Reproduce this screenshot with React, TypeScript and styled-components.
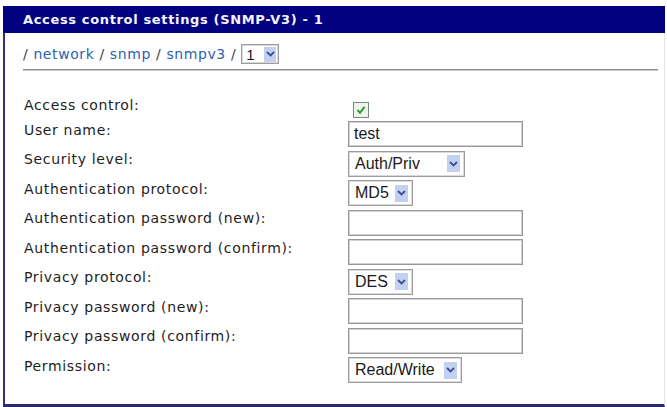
import React from "react";
import styled, { createGlobalStyle } from "styled-components";

const Global = createGlobalStyle`
  html, body { margin: 0; padding: 0; background: #ffffff; }
  body { font-family: "DejaVu Sans", Verdana, sans-serif; }
`;

const Frame = styled.section`
  margin: 6px 2px 0 3px;
  display: flex;
  flex-direction: column;
`;

const TitleBar = styled.div`
  height: 27px;
  background: #01017f;
  color: #f4f4ff;
  font-family: "DejaVu Sans", Verdana, sans-serif;
  font-weight: bold;
  font-size: 13px;
  letter-spacing: 0.65px;
  display: flex;
  align-items: center;
  padding-left: 20px;
`;

const Body = styled.div`
  border-left: 2px solid #30307a;
  border-right: 1px solid #e4e4ec;
  border-bottom: 3px solid #2c2a68;
  padding: 11px 6px 19px 18px;
  display: flex;
  flex-direction: column;
`;

const Crumbs = styled.nav`
  display: flex;
  align-items: center;
  height: 20px;
  font-family: "DejaVu Sans", Verdana, sans-serif;
  font-size: 14px;
  letter-spacing: 0.6px;
  color: #3a3a3a;
  white-space: pre;
`;

const Crumb = styled.a`
  color: #2f5fae;
  text-decoration: none;
`;

const Rule = styled.hr`
  margin: 5px 0 0 0;
  border: none;
  border-top: 1px solid #8c8c8c;
  border-bottom: 1px solid #c8c8c8;
  height: 0;
`;

const Form = styled.div`
  margin-top: 26px;
  display: flex;
  flex-direction: column;
`;

const Row = styled.div<{ $h: number }>`
  display: grid;
  grid-template-columns: 325px auto;
  align-items: center;
  height: ${(p) => p.$h}px;
`;

const Label = styled.span`
  padding: 0 0 9px 1px;
  font-family: "DejaVu Sans", Verdana, sans-serif;
  font-size: 14px;
  letter-spacing: 0.65px;
  color: #1e1e1e;
  white-space: nowrap;
`;

const Control = styled.div`
  display: flex;
  align-items: center;
`;

const TextInput = styled.div`
  box-sizing: border-box;
  width: 175px;
  height: 26px;
  border: 1px solid #989898;
  box-shadow: inset 0 0 0 1px #d2d2d2;
  background: #fff;
  padding-left: 5px;
  display: flex;
  align-items: center;
  font-family: "Liberation Sans", Arial, sans-serif;
  font-size: 16px;
  color: #1a1a1a;
`;

const SelectBox = styled.div<{ $w: number; $small?: boolean }>`
  box-sizing: border-box;
  width: ${(p) => p.$w}px;
  height: ${(p) => (p.$small ? 20 : 26)}px;
  border: 1px solid #9c9c9c;
  box-shadow: inset 0 0 0 1px #dadada;
  background: #fff;
  display: flex;
  align-items: center;
  padding-left: ${(p) => (p.$small ? 4 : 6)}px;
  font-family: "Liberation Sans", Arial, sans-serif;
  font-size: ${(p) => (p.$small ? 15 : 16)}px;
  color: #1a1a1a;
`;

const SelectText = styled.span`
  flex: 1;
  white-space: nowrap;
`;

const ArrowBox = styled.span<{ $small?: boolean }>`
  width: ${(p) => (p.$small ? 12 : 13)}px;
  height: ${(p) => (p.$small ? 15 : 17)}px;
  margin-right: ${(p) => (p.$small ? 2 : 4)}px;
  background: #c3d1f1;
  display: flex;
  align-items: center;
  justify-content: center;
`;

const CheckBox = styled.span`
  box-sizing: border-box;
  margin-left: 5px;
  width: 16px;
  height: 16px;
  border: 1px solid #7a8a7a;
  background: #eef4ec;
  display: flex;
  align-items: center;
  justify-content: center;
`;

const Chevron = () => (
  <svg width="9" height="6" viewBox="0 0 9 6">
    <polyline points="1,1 4.5,4.5 8,1" fill="none" stroke="#3c4f99" strokeWidth="1.8" />
  </svg>
);

const Select = ({ value, w, small }: { value: string; w: number; small?: boolean }) => (
  <SelectBox $w={w} $small={small}>
    <SelectText>{value}</SelectText>
    <ArrowBox $small={small}>
      <Chevron />
    </ArrowBox>
  </SelectBox>
);

const Check = () => (
  <CheckBox>
    <svg width="10" height="10" viewBox="0 0 10 10">
      <polyline points="1.5,5 4,7.8 8.6,1.8" fill="none" stroke="#2e9a2e" strokeWidth="2" />
    </svg>
  </CheckBox>
);

type Field =
  | { label: string; kind: "check" }
  | { label: string; kind: "text"; value?: string }
  | { label: string; kind: "select"; value: string; w: number };

const fields: Field[] = [
  { label: "Access control:", kind: "check" },
  { label: "User name:", kind: "text", value: "test" },
  { label: "Security level:", kind: "select", value: "Auth/Priv", w: 117 },
  { label: "Authentication protocol:", kind: "select", value: "MD5", w: 65 },
  { label: "Authentication password (new):", kind: "text" },
  { label: "Authentication password (confirm):", kind: "text" },
  { label: "Privacy protocol:", kind: "select", value: "DES", w: 65 },
  { label: "Privacy password (new):", kind: "text" },
  { label: "Privacy password (confirm):", kind: "text" },
  { label: "Permission:", kind: "select", value: "Read/Write", w: 114 },
];

export default function App() {
  return (
    <>
      <Global />
      <Frame>
        <TitleBar>Access control settings (SNMP-V3) - 1</TitleBar>
        <Body>
          <Crumbs>
            {"/ "}
            <Crumb>network</Crumb>
            {" / "}
            <Crumb>snmp</Crumb>
            {" / "}
            <Crumb>snmpv3</Crumb>
            {" / "}
            <Select value="1" w={38} small />
          </Crumbs>
          <Rule />
          <Form>
            {fields.map((f, i) => (
              <Row key={f.label} $h={i === 0 ? 22.5 : 29.5}>
                <Label>{f.label}</Label>
                <Control>
                  {f.kind === "check" && <Check />}
                  {f.kind === "text" && <TextInput>{f.value ?? ""}</TextInput>}
                  {f.kind === "select" && <Select value={f.value} w={f.w} />}
                </Control>
              </Row>
            ))}
          </Form>
        </Body>
      </Frame>
    </>
  );
}
